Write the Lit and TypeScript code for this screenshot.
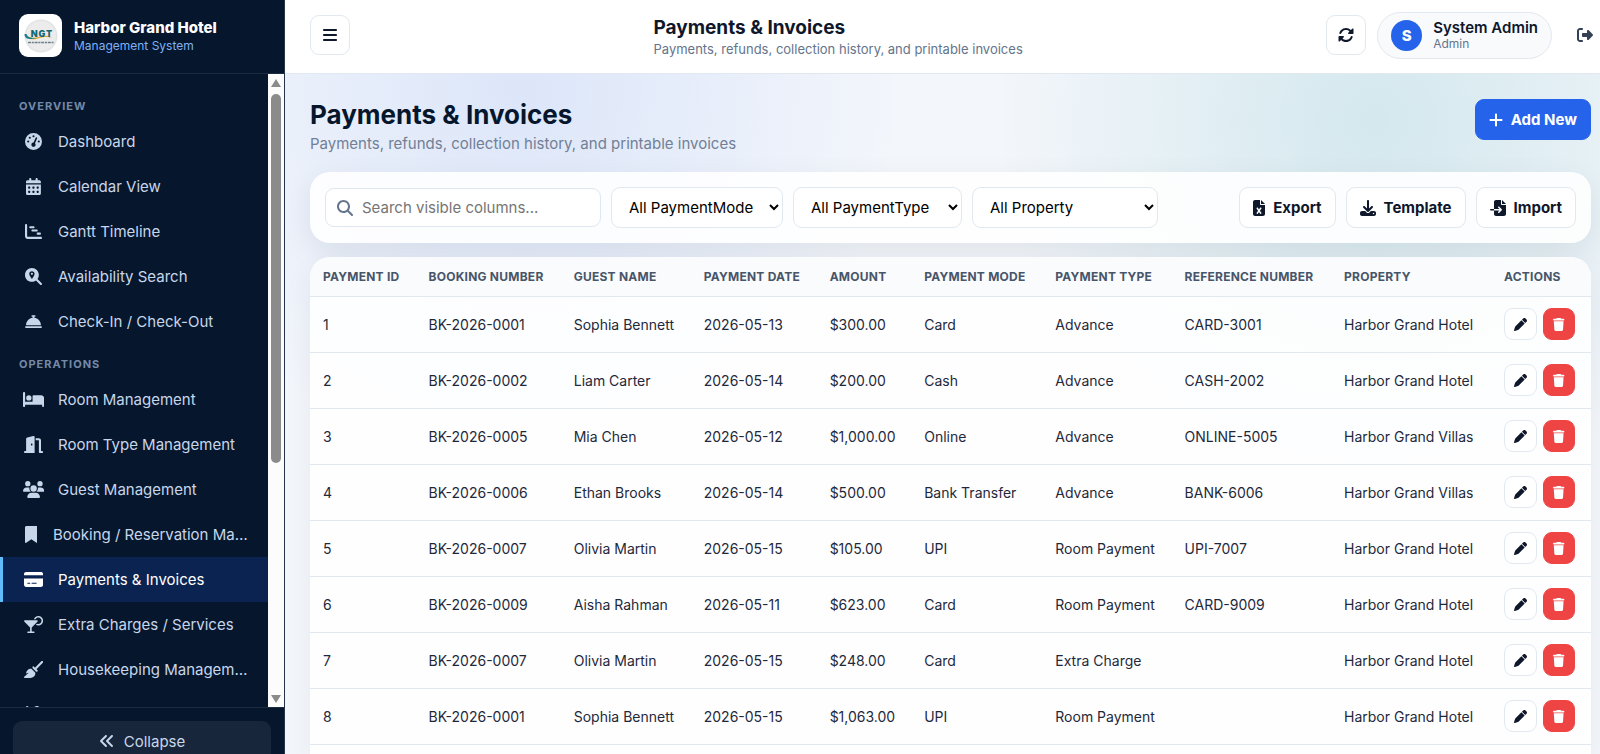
import { LitElement, html, css, svg, nothing } from "lit";
import { customElement, property, state } from "lit/decorators.js";
import { classMap } from "lit/directives/class-map.js";

type Glyph = { w: number; d: string };

const dayCell = (x: number, y: number) =>
  `M${x} ${y}l0 32c0 8.8 7.2 16 16 16l32 0c8.8 0 16-7.2 16-16l0-32c0-8.8-7.2-16-16-16l-32 0c-8.8 0-16 7.2-16 16z`;

const GLYPHS: Record<string, Glyph> = {
  bars: { w: 448, d: "M0 96C0 78.300 14.300 64 32 64l384 0c17.700 0 32 14.300 32 32s-14.300 32-32 32L32 128C14.300 128 0 113.700 0 96zM0 256c0-17.700 14.300-32 32-32l384 0c17.700 0 32 14.300 32 32s-14.300 32-32 32L32 288c-17.700 0-32-14.300-32-32zM448 416c0 17.700-14.300 32-32 32L32 448c-17.700 0-32-14.300-32-32s14.300-32 32-32l384 0c17.700 0 32 14.300 32 32z" },
  gauge: { w: 512, d: "M0 256a256 256 0 1 1 512 0A256 256 0 1 1 0 256zM288 96a32 32 0 1 0 -64 0 32 32 0 1 0 64 0zM256 416c35.3 0 64-28.7 64-64c0-17.4-6.9-33.1-18.1-44.6L366 161.7c5.3-12.1-.2-26.3-12.3-31.6s-26.3 .2-31.6 12.3L257.9 288c-.6 0-1.3 0-1.9 0c-35.3 0-64 28.7-64 64s28.700 64 64 64zM176 144a32 32 0 1 0 -64 0 32 32 0 1 0 64 0zM96 288a32 32 0 1 0 0-64 32 32 0 1 0 0 64zm352-32a32 32 0 1 0 -64 0 32 32 0 1 0 64 0z" },
  calendar: { w: 448, d: "M128 0c17.7 0 32 14.3 32 32l0 32 128 0 0-32c0-17.7 14.3-32 32-32s32 14.3 32 32l0 32 48 0c26.5 0 48 21.5 48 48l0 48L0 160l0-48C0 85.5 21.5 64 48 64l48 0 0-32c0-17.7 14.3-32 32-32zM0 192l448 0 0 272c0 26.5-21.5 48-48 48L48 512c-26.5 0-48-21.5-48-48L0 192z" + [64, 192, 320].map((x) => dayCell(x, 272) + dayCell(x, 400)).join("") },
  gantt: { w: 512, d: "M32 32c17.7 0 32 14.3 32 32l0 336c0 8.8 7.2 16 16 16l400 0c17.7 0 32 14.3 32 32s-14.3 32-32 32L80 480c-44.2 0-80-35.8-80-80L0 64C0 46.3 14.3 32 32 32zm96 96c0-17.7 14.3-32 32-32l96 0c17.7 0 32 14.3 32 32s-14.3 32-32 32l-96 0c-17.7 0-32-14.3-32-32zm96 64l128 0c17.7 0 32 14.3 32 32s-14.3 32-32 32l-128 0c-17.7 0-32-14.3-32-32s14.3-32 32-32zm160 96l64 0c17.7 0 32 14.3 32 32s-14.3 32-32 32l-64 0c-17.7 0-32-14.3-32-32s14.3-32 32-32z" },
  locate: { w: 512, d: "M416 208c0 45.9-14.9 88.3-40 122.7L502.6 457.4c12.5 12.5 12.5 32.8 0 45.3s-32.8 12.5-45.3 0L330.7 376c-34.4 25.2-76.8 40-122.7 40C93.1 416 0 322.9 0 208S93.1 0 208 0S416 93.1 416 208zM288 176c0-44.200-35.800-80-80-80s-80 35.800-80 80c0 48.800 46.500 111.600 68.600 138.600c6 7.300 16.800 7.300 22.700 0c22.100-27 68.700-89.800 68.700-138.600zm-112 0a32 32 0 1 1 64 0 32 32 0 1 1 -64 0z" },
  bell: { w: 512, d: "M216 64c-13.3 0-24 10.7-24 24s10.7 24 24 24l16 0 0 33.3C119.6 157.2 32 252.4 32 368l448 0c0-115.6-87.6-210.8-200-222.7l0-33.3 16 0c13.3 0 24-10.7 24-24s-10.7-24-24-24l-80 0zM24 400c-13.3 0-24 10.7-24 24s10.7 24 24 24l464 0c13.3 0 24-10.7 24-24s-10.7-24-24-24L24 400z" },
  bed: { w: 640, d: "M32 32c17.7 0 32 14.3 32 32l0 256 224 0 0-160c0-17.7 14.3-32 32-32l224 0c53 0 96 43 96 96l0 224c0 17.7-14.3 32-32 32s-32-14.3-32-32l0-32L64 416l0 32c0 17.7-14.3 32-32 32s-32-14.3-32-32L0 64C0 46.3 14.3 32 32 32zm144 96a80 80 0 1 1 0 160 80 80 0 1 1 0-160z" },
  door: { w: 576, d: "M320 32c0-9.9-4.5-19.2-12.3-25.2S289.8-1.4 280.2 1l-179.9 45C79 51.3 64 70.5 64 92.5L64 448l-32 0c-17.7 0-32 14.3-32 32s14.3 32 32 32l288 0 0-480zM256 256c0 17.7-10.7 32-24 32s-24-14.3-24-32s10.7-32 24-32s24 14.3 24 32zm96-128l96 0 0 352c0 17.7 14.3 32 32 32l64 0c17.7 0 32-14.3 32-32s-14.3-32-32-32l-32 0 0-320c0-35.3-28.7-64-64-64l-96 0 0 64z" },
  users: { w: 640, d: "M144 0a80 80 0 1 1 0 160A80 80 0 1 1 144 0zM512 0a80 80 0 1 1 0 160A80 80 0 1 1 512 0zM0 298.7C0 239.8 47.8 192 106.7 192l42.7 0c15.9 0 31 3.5 44.6 9.7c-1.3 7.2-1.9 14.7-1.9 22.3c0 38.2 16.8 72.5 43.3 96L21.3 320C9.6 320 0 310.4 0 298.7zM405.3 320c26.6-23.5 43.3-57.8 43.3-96c0-7.6-.7-15-1.9-22.3c13.6-6.3 28.7-9.7 44.6-9.7l42.700 0C592.2 192 640 239.8 640 298.7c0 11.8-9.6 21.3-21.3 21.3l-213.3 0zM224 224a96 96 0 1 1 192 0 96 96 0 1 1 -192 0zM128 485.3C128 411.7 187.7 352 261.3 352l117.3 0C452.3 352 512 411.7 512 485.3c0 14.7-11.9 26.7-26.700 26.700l-330.700 0c-14.700 0-26.700-11.900-26.700-26.700z" },
  bookmark: { w: 384, d: "M0 48V487.7C0 501.1 10.9 512 24.3 512c5 0 9.9-1.5 14-4.4L192 400 345.7 507.600c4.100 2.900 9 4.400 14 4.400c13.400 0 24.300-10.900 24.300-24.300V48c0-26.500-21.500-48-48-48H48C21.500 0 0 21.500 0 48z" },
  card: { w: 576, d: "M64 32C28.7 32 0 60.7 0 96l0 32 576 0 0-32c0-35.3-28.7-64-64-64L64 32zM576 224L0 224 0 416c0 35.3 28.7 64 64 64l448 0c35.3 0 64-28.7 64-64l0-192zM112 352l64 0c8.8 0 16 7.2 16 16s-7.2 16-16 16l-64 0c-8.8 0-16-7.2-16-16s7.2-16 16-16zm112 16c0-8.8 7.2-16 16-16l128 0c8.8 0 16 7.2 16 16s-7.2 16-16 16l-128 0c-8.8 0-16-7.2-16-16z" },
  martini: { w: 576, d: "M432 240c53 0 96-43 96-96s-43-96-96-96c-35.5 0-66.6 19.300-83.200 48l-52.600 0C316 40.100 369.300 0 432 0c79.500 0 144 64.500 144 144s-64.500 144-144 144c-27.700 0-53.500-7.800-75.500-21.300l35.400-35.400c12.200 5.600 25.800 8.700 40.100 8.700zM1.800 142.800C5.500 133.800 14.300 128 24 128l368 0c9.700 0 18.500 5.800 22.200 14.800s1.700 19.300-5.200 26.200L232 345.900 232 464l64 0c13.300 0 24 10.700 24 24s-10.700 24-24 24l-176 0c-13.300 0-24-10.700-24-24s10.700-24 24-24l64 0 0-118.100L7 169c-6.900-6.900-8.900-17.200-5.200-26.200z" },
  broom: { w: 576, d: "M566.6 54.6c12.5-12.5 12.5-32.8 0-45.3s-32.8-12.5-45.3 0l-192 192-34.7-34.7c-4.2-4.2-10-6.6-16-6.6c-12.5 0-22.6 10.1-22.6 22.6l0 29.1L364.3 320l29.1 0c12.5 0 22.6-10.1 22.6-22.6c0-6-2.4-11.8-6.6-16l-34.7-34.7 192-192zM341.1 353.4L222.6 234.9c-42.7-3.7-85.2 11.7-115.8 42.3l-8 8C76.5 307.5 64 337.7 64 369.2c0 6.8 7.1 11.2 13.2 8.2l51.1-25.5c5-2.5 9.5 4.1 5.4 7.9L7.3 473.4C2.7 477.6 0 483.6 0 489.9C0 502.1 9.9 512 22.1 512l173.3 0c38.8 0 75.9-15.4 103.4-42.8c30.6-30.6 45.9-73.1 42.3-115.8z" },
  tools: { w: 512, d: "M78.6 5C69.1-2.4 55.6-1.5 47 7L7 47c-8.5 8.5-9.4 22-2.1 31.6l80 104c4.5 5.9 11.6 9.4 19 9.400l54.100 0 109 109c-14.700 29-10 65.400 14.300 89.600l112 112c12.500 12.500 32.800 12.500 45.300 0l64-64c12.500-12.500 12.500-32.800 0-45.300l-112-112c-24.200-24.200-60.600-29-89.600-14.300l-109-109 0-54.100c0-7.500-3.500-14.500-9.400-19L78.600 5zM19.900 396.100C7.200 408.800 0 426.100 0 444.100C0 481.600 30.400 512 67.900 512c18 0 35.300-7.200 48-19.900L233.700 374.300c-7.800-20.900-9-43.600-3.600-65.100l-61.700-61.700L19.900 396.100zM512 144c0-10.500-1.100-20.700-3.200-30.500c-2.400-11.200-16.100-14.100-24.200-6l-63.900 63.900c-3 3-7.100 4.700-11.300 4.700L352 176c-8.800 0-16-7.200-16-16l0-57.400c0-4.200 1.700-8.300 4.700-11.300l63.900-63.900c8.100-8.100 5.200-21.800-6-24.200C388.700 1.100 378.500 0 368 0C288.500 0 224 64.500 224 144l0 .8 85.300 85.300c36-9.100 75.800 .5 104 28.700L429 274.500c49-23 83-72.800 83-130.500z" },
  collapse: { w: 512, d: "M41.4 233.4c-12.5 12.5-12.5 32.8 0 45.3l160 160c12.5 12.5 32.8 12.5 45.3 0s12.5-32.8 0-45.3L109.3 256 246.6 118.6c12.5-12.5 12.5-32.8 0-45.3s-32.8-12.5-45.3 0l-160 160zm352-160l-160 160c-12.5 12.5-12.5 32.8 0 45.3l160 160c12.5 12.5 32.8 12.5 45.3 0s12.5-32.8 0-45.3L301.3 256 438.6 118.6c12.5-12.5 12.5-32.8 0-45.3s-32.8-12.5-45.3 0z" },
  rotate: { w: 512, d: "M142.9 142.9c-17.5 17.5-30.1 38-37.8 59.8c-5.9 16.7-24.2 25.4-40.8 19.5s-25.4-24.2-19.5-40.8C55.6 150.7 73.2 122 97.6 97.6c87.2-87.2 228.3-87.5 315.8-1L455 55c6.9-6.9 17.2-8.9 26.2-5.2s14.8 12.5 14.8 22.2l0 128c0 13.3-10.7 24-24 24L344 224c-9.7 0-18.5-5.8-22.2-14.8s-1.7-19.3 5.2-26.2l41.1-41.1c-62.6-61.5-163.1-61.2-225.3 1zM16 312c0-13.3 10.7-24 24-24L168 288c9.7 0 18.5 5.8 22.2 14.8s1.7 19.3-5.2 26.2l-41.1 41.1c62.6 61.5 163.1 61.2 225.3-1c17.5-17.5 30.1-38 37.8-59.8c5.9-16.7 24.2-25.4 40.8-19.5s25.4 24.2 19.5 40.8c-10.8 30.6-28.4 59.3-52.9 83.8c-87.2 87.2-228.3 87.5-315.8 1L57 457c-6.9 6.9-17.2 8.900-26.200 5.200S16 449.700 16 440l0-128z" },
  logout: { w: 512, d: "M377.9 105.9L500.7 228.7c7.2 7.2 11.3 17.1 11.3 27.3s-4.1 20.1-11.3 27.3L377.9 406.1c-6.4 6.4-15 9.9-24 9.9c-18.7 0-33.9-15.2-33.9-33.9l0-62.1-128 0c-17.7 0-32-14.3-32-32l0-64c0-17.7 14.3-32 32-32l128 0 0-62.1c0-18.7 15.2-33.9 33.9-33.9c9 0 17.6 3.6 24 9.9zM160 96L96 96c-17.7 0-32 14.3-32 32l0 256c0 17.7 14.3 32 32 32l64 0c17.7 0 32 14.3 32 32s-14.3 32-32 32l-64 0c-53 0-96-43-96-96L0 128C0 75 43 32 96 32l64 0c17.7 0 32 14.3 32 32s-14.3 32-32 32z" },
  plus: { w: 448, d: "M256 80c0-17.7-14.3-32-32-32s-32 14.3-32 32l0 144L48 224c-17.7 0-32 14.3-32 32s14.3 32 32 32l144 0 0 144c0 17.7 14.3 32 32 32s32-14.3 32-32l0-144 144 0c17.7 0 32-14.3 32-32s-14.3-32-32-32l-144 0 0-144z" },
  search: { w: 512, d: "M416 208c0 45.9-14.9 88.3-40 122.7L502.6 457.4c12.5 12.5 12.5 32.8 0 45.3s-32.8 12.5-45.3 0L330.7 376c-34.4 25.2-76.8 40-122.7 40C93.1 416 0 322.9 0 208S93.1 0 208 0S416 93.1 416 208zM208 352a144 144 0 1 0 0-288 144 144 0 1 0 0 288z" },
  excel: { w: 384, d: "M64 0C28.7 0 0 28.7 0 64L0 448c0 35.3 28.7 64 64 64l256 0c35.3 0 64-28.7 64-64l0-288-128 0c-17.7 0-32-14.3-32-32L224 0 64 0zM256 0l0 128 128 0L256 0zM155.700 250.200L192 302.100l36.300-51.900c7.600-10.900 22.600-13.500 33.400-5.900s13.500 22.600 5.900 33.400L221.300 344l46.400 66.200c7.600 10.900 5 25.800-5.900 33.400s-25.800 5-33.400-5.900L192 385.800l-36.300 51.900c-7.600 10.900-22.600 13.500-33.400 5.900s-13.500-22.600-5.900-33.400L162.700 344l-46.400-66.200c-7.600-10.900-5-25.800 5.900-33.400s25.800-5 33.400 5.900z" },
  download: { w: 512, d: "M288 32c0-17.7-14.3-32-32-32s-32 14.3-32 32l0 242.7-73.4-73.4c-12.5-12.5-32.8-12.5-45.3 0s-12.5 32.8 0 45.3l128 128c12.5 12.5 32.8 12.5 45.3 0l128-128c12.5-12.5 12.5-32.8 0-45.3s-32.8-12.5-45.3 0L288 274.7 288 32zM64 352c-35.3 0-64 28.7-64 64l0 32c0 35.3 28.7 64 64 64l384 0c35.3 0 64-28.7 64-64l0-32c0-35.3-28.7-64-64-64l-101.5 0-45.3 45.3c-25 25-65.5 25-90.5 0L165.5 352 64 352zm368 56a24 24 0 1 1 0 48 24 24 0 1 1 0-48z" },
  fileImport: { w: 512, d: "M128 64c0-35.3 28.7-64 64-64L352 0l0 128c0 17.7 14.3 32 32 32l128 0 0 288c0 35.3-28.7 64-64 64l-256 0c-35.3 0-64-28.7-64-64l0-112 174.1 0-39 39c-9.4 9.4-9.4 24.6 0 33.9s24.6 9.4 33.9 0l80-80c9.4-9.4 9.4-24.6 0-33.9l-80-80c-9.4-9.4-24.6-9.4-33.9 0s-9.4 24.6 0 33.9l39 39L128 288l0-224zm0 224l0 48L24 336c-13.3 0-24-10.7-24-24s10.7-24 24-24l104 0zM512 128l-128 0L384 0 512 128z" },
  pen: { w: 512, d: "M362.7 19.3L314.3 67.7 444.3 197.7l48.4-48.4c25-25 25-65.5 0-90.5L453.3 19.3c-25-25-65.5-25-90.5 0zm-71 71L58.6 323.5c-10.4 10.4-18 23.3-22.2 37.4L1 481.2C-1.5 489.7 .8 498.8 7 505s15.3 8.5 23.7 6.1l120.3-35.4c14.1-4.2 27-11.8 37.4-22.2L421.7 220.3 291.7 90.3z" },
  trash: { w: 448, d: "M135.2 17.7L128 32 32 32C14.3 32 0 46.3 0 64S14.3 96 32 96l384 0c17.7 0 32-14.3 32-32s-14.3-32-32-32l-96 0-7.2-14.3C307.4 6.8 296.3 0 284.2 0L163.8 0c-12.1 0-23.2 6.8-28.6 17.7zM416 128L32 128 53.2 467c1.6 25.3 22.6 45 47.9 45l245.8 0c25.3 0 46.3-19.7 47.9-45L416 128z" },
};

const icon = (name: string, size = 16) => {
  const g = GLYPHS[name];
  return html`<svg viewBox="0 0 ${g.w} 512" width=${(g.w * size) / 512} height=${size} fill="currentColor" fill-rule="evenodd" aria-hidden="true">${svg`<path d=${g.d}></path>`}</svg>`;
};

const base = css`
  *, *::before, *::after { box-sizing: border-box; }
  :host { font-family: Inter, "Liberation Sans", sans-serif; color: #0f172a; }
  svg { display: block; flex: none; }
  button, input, select { font: inherit; color: inherit; margin: 0; }
  button { cursor: pointer; }
  h1, h2, p { margin: 0; }
`;

const NAV = [
  { title: "Overview", items: [["gauge", "Dashboard"], ["calendar", "Calendar View"], ["gantt", "Gantt Timeline"], ["locate", "Availability Search"], ["bell", "Check-In / Check-Out"]] },
  { title: "Operations", items: [["bed", "Room Management"], ["door", "Room Type Management"], ["users", "Guest Management"], ["bookmark", "Booking / Reservation Management"], ["card", "Payments & Invoices"], ["martini", "Extra Charges / Services"], ["broom", "Housekeeping Management"], ["tools", "Maintenance"]] },
];

@customElement("hotel-sidebar")
class HotelSidebar extends LitElement {
  @property() active = "";

  static styles = [base, css`
    :host { display: flex; flex-direction: column; height: 100%; min-height: 0; background: #06172d; border-right: 1px solid #24344a; }
    .brand { display: flex; align-items: center; gap: 12px; height: 74px; flex: none; padding: 0 19px 2px; border-bottom: 1px solid #1b2b40; }
    .logo { width: 43px; height: 43px; border-radius: 9px; background: #fff; display: grid; place-items: center; }
    .name { font-size: 15px; line-height: 20px; font-weight: 800; color: #fff; white-space: nowrap; }
    .tag { font-size: 12px; line-height: 16px; color: #7fb0f5; }
    .body { display: flex; flex: 1; min-height: 0; }
    nav { flex: 1; min-width: 0; overflow: hidden; padding-top: 12px; }
    .group { padding: 13px 19px 6px; font-size: 11px; line-height: 14px; font-weight: 700; letter-spacing: 1px; text-transform: uppercase; color: #7589a8; }
    .item { display: flex; align-items: center; gap: 13px; height: 45px; padding: 0 16px 0 19px; border-left: 3px solid transparent; color: #c8d6ea; font-size: 15px; text-decoration: none; }
    .item.on { background: #0b2350; border-left-color: #60bdfa; color: #fff; }
    .ico { display: grid; place-items: center; flex: 0 0 23px; }
    .ico.tight { flex-basis: 18px; }
    .label { flex: 1; min-width: 0; overflow: hidden; text-overflow: ellipsis; white-space: nowrap; line-height: 24px; }
    .bar { flex: 0 0 16px; background: #fcfcfc; display: flex; flex-direction: column; align-items: center; padding: 5px 0 4px; }
    .arrow { border: 5px solid transparent; border-top: 0; border-bottom: 8px solid #8b8b8b; }
    .arrow.down { border-bottom: 0; border-top: 8px solid #8b8b8b; }
    .track { flex: 1; width: 10px; padding: 7px 0 6px; }
    .thumb { height: 62%; border-radius: 5px; background: #8b8b8b; }
    .foot { flex: none; padding: 13px; height: 47px; border-top: 1px solid #1b2b40; overflow: hidden; }
    .collapse { width: 100%; height: 40px; border: 0; border-radius: 9px; background: #17263b; color: #c8d6ea; font-size: 15px; display: flex; align-items: center; justify-content: center; gap: 9px; }
  `];

  render() {
    return html`
      <div class="brand">
        <div class="logo">
          <svg width="36" height="36" viewBox="0 0 36 36" role="img" aria-label="NGT">
            <circle cx="18" cy="18" r="16.500" fill="#e2e3e5"></circle>
            <circle cx="18" cy="18" r="15" fill="#ececed"></circle>
            <path d="M4 17c1 5 6 5 11 3.500 5-1.500 9-2 14-.5-5-3.500-10-2-14-1C10 20.300 6 20 4 17z" fill="#e2a93b"></path>
            <path d="M1.500 16c0 5.500 6 6 12 4-5 .3-9-.5-10-4z" fill="#17818a"></path>
            <text x="19" y="19" text-anchor="middle" font-size="9" font-weight="900" letter-spacing="1" fill="#176a74">NGT</text>
            <path d="M5 24.500h26" stroke="#6d7f88" stroke-width="1.500" stroke-dasharray="3 .8 2 .8"></path>
          </svg>
        </div>
        <div>
          <div class="name">Harbor Grand Hotel</div>
          <div class="tag">Management System</div>
        </div>
      </div>
      <div class="body">
        <nav aria-label="Main">
          ${NAV.map((g) => html`
            <div class="group">${g.title}</div>
            ${g.items.map(([ico, label]) => html`
              <a class=${classMap({ item: true, on: label === this.active })} href="#" aria-current=${label === this.active ? "page" : nothing}>
                <span class=${classMap({ ico: true, tight: ico === "bookmark" })}>${icon(ico, 17)}</span>
                <span class="label">${label}</span>
              </a>`)}
          `)}
        </nav>
        <div class="bar" aria-hidden="true">
          <div class="arrow"></div>
          <div class="track"><div class="thumb"></div></div>
          <div class="arrow down"></div>
        </div>
      </div>
      <div class="foot"><button class="collapse" type="button">${icon("collapse", 16)}<span>Collapse</span></button></div>
    `;
  }
}

@customElement("top-bar")
class TopBar extends LitElement {
  static styles = [base, css`
    :host { display: flex; align-items: center; justify-content: space-between; height: 74px; padding: 0 7px 3px 25px; background: #fff; border-bottom: 1px solid #e2e8f0; }
    .square { width: 40px; height: 40px; border: 1px solid #e2e8f0; border-radius: 9px; background: #fff; display: grid; place-items: center; padding: 0; }
    .heading { padding-top: 3px; }
    .title { font-size: 19px; line-height: 24px; font-weight: 700; }
    .sub { font-size: 13px; line-height: 18px; color: #64748b; }
    .right { display: flex; align-items: center; gap: 11px; }
    .user { display: flex; align-items: center; gap: 11px; height: 47px; padding: 0 13px; border: 1px solid #e2e8f0; border-radius: 24px; background: #f8fafc; }
    .avatar { width: 31px; height: 31px; border-radius: 50%; background: #2563eb; color: #fff; font-size: 15px; font-weight: 800; display: grid; place-items: center; }
    .who { font-size: 15px; line-height: 18px; font-weight: 600; white-space: nowrap; }
    .role { font-size: 12px; line-height: 14px; color: #64748b; }
    .exit { border: 0; background: none; height: 40px; padding: 0 0 0 14px; display: grid; place-items: center; color: #334155; }
  `];

  render() {
    return html`
      <button class="square" type="button" aria-label="Toggle menu">${icon("bars", 16)}</button>
      <div class="heading">
        <div class="title">Payments &amp; Invoices</div>
        <p class="sub">Payments, refunds, collection history, and printable invoices</p>
      </div>
      <div class="right">
        <button class="square" type="button" aria-label="Refresh">${icon("rotate", 16)}</button>
        <div class="user">
          <span class="avatar">S</span>
          <div><div class="who">System Admin</div><div class="role">Admin</div></div>
        </div>
        <button class="exit" type="button" aria-label="Log out">${icon("logout", 16)}</button>
      </div>
    `;
  }
}

const HEADS = ["Payment ID", "Booking Number", "Guest Name", "Payment Date", "Amount", "Payment Mode", "Payment Type", "Reference Number", "Property", "Actions"];

const ROWS = [
  ["1", "BK-2026-0001", "Sophia Bennett", "2026-05-13", "$300.00", "Card", "Advance", "CARD-3001", "Harbor Grand Hotel"],
  ["2", "BK-2026-0002", "Liam Carter", "2026-05-14", "$200.00", "Cash", "Advance", "CASH-2002", "Harbor Grand Hotel"],
  ["3", "BK-2026-0005", "Mia Chen", "2026-05-12", "$1,000.00", "Online", "Advance", "ONLINE-5005", "Harbor Grand Villas"],
  ["4", "BK-2026-0006", "Ethan Brooks", "2026-05-14", "$500.00", "Bank Transfer", "Advance", "BANK-6006", "Harbor Grand Villas"],
  ["5", "BK-2026-0007", "Olivia Martin", "2026-05-15", "$105.00", "UPI", "Room Payment", "UPI-7007", "Harbor Grand Hotel"],
  ["6", "BK-2026-0009", "Aisha Rahman", "2026-05-11", "$623.00", "Card", "Room Payment", "CARD-9009", "Harbor Grand Hotel"],
  ["7", "BK-2026-0007", "Olivia Martin", "2026-05-15", "$248.00", "Card", "Extra Charge", "", "Harbor Grand Hotel"],
  ["8", "BK-2026-0001", "Sophia Bennett", "2026-05-15", "$1,063.00", "UPI", "Room Payment", "", "Harbor Grand Hotel"],
];

@customElement("payments-table")
class PaymentsTable extends LitElement {
  @property({ attribute: false }) rows: string[][] = [];

  static styles = [base, css`
    :host { display: block; flex: 1; background: rgba(255, 255, 255, 0.88); border-radius: 20px 20px 0 0; box-shadow: 0 10px 30px rgba(15, 23, 42, 0.06); overflow: hidden; }
    table { width: 100%; border-collapse: collapse; }
    th { height: 39px; padding: 0 13px; text-align: left; font-size: 12px; font-weight: 700; letter-spacing: 0.02em; text-transform: uppercase; color: #475569; background: rgba(248, 250, 252, 0.7); border-bottom: 1px solid #e2e8f0; white-space: nowrap; }
    td { height: 56px; padding: 0 13px; font-size: 14px; color: #1e293b; border-bottom: 1px solid #e2e8f0; white-space: nowrap; }
    .acts { display: flex; gap: 6px; }
    .act { width: 33px; height: 32px; padding: 0; border-radius: 9px; display: grid; place-items: center; border: 1px solid #e2e8f0; background: #fff; color: #0f172a; }
    .act.del { width: 32px; border-color: #ef4444; background: #ef4444; color: #fff; }
  `];

  render() {
    return html`
      <table>
        <thead><tr>${HEADS.map((h) => html`<th scope="col">${h}</th>`)}</tr></thead>
        <tbody>
          ${this.rows.map((r) => html`<tr>
            ${r.map((c) => html`<td>${c}</td>`)}
            <td><div class="acts">
              <button class="act" type="button" aria-label="Edit payment ${r[0]}">${icon("pen", 13)}</button>
              <button class="act del" type="button" aria-label="Delete payment ${r[0]}">${icon("trash", 13)}</button>
            </div></td>
          </tr>`)}
        </tbody>
      </table>
    `;
  }
}

@customElement("app-root")
class AppRoot extends LitElement {
  @state() private query = "";

  static styles = [base, css`
    :host { display: grid; grid-template-columns: 285px minmax(0, 1fr); height: 100vh; overflow: hidden; }
    .main { display: flex; flex-direction: column; min-width: 0; min-height: 0; overflow: hidden;
      background:
        radial-gradient(circle at 18% 12%, rgba(37, 99, 235, 0.11), rgba(37, 99, 235, 0) 380px),
        radial-gradient(circle at 83% 16%, rgba(20, 148, 156, 0.14), rgba(20, 148, 156, 0) 380px),
        #f3f6fb; }
    .page { flex: 1; display: flex; flex-direction: column; min-height: 0; padding: 25px 9px 0 25px; }
    .head { display: flex; justify-content: space-between; align-items: flex-start; margin-bottom: 17px; }
    h1 { font-size: 26px; line-height: 31px; font-weight: 700; color: #06172d; }
    .lead { margin-top: 3px; font-size: 15px; line-height: 22px; color: #718096; }
    .btn { display: flex; align-items: center; gap: 8px; height: 41px; padding: 0 13px; border: 1px solid #e2e8f0; border-radius: 9px; background: #fff; font-size: 15px; font-weight: 700; white-space: nowrap; }
    .btn.primary { background: #2563eb; border-color: #2563eb; color: #fff; }
    .tools { display: flex; align-items: center; gap: 10px; height: 71px; flex: none; padding: 0 15px; margin-bottom: 14px; border-radius: 20px; background: rgba(255, 255, 255, 0.88); box-shadow: 0 10px 30px rgba(15, 23, 42, 0.08); }
    .search { display: flex; align-items: center; gap: 9px; width: 276px; height: 39px; padding: 0 11px; border: 1px solid #dfe7f0; border-radius: 9px; background: #fff; color: #64748b; }
    .search input { flex: 1; min-width: 0; border: 0; outline: 0; padding: 0; background: none; font-size: 15px; color: #0f172a; }
    .search input::placeholder { color: #757575; }
    select { height: 41px; padding: 0 0 0 13px; border: 1px solid #e2e8f0; border-radius: 9px; background: #fff; color: #000; font-size: 15px; }
    .mode { width: 172px; }
    .type { width: 169px; }
    .place { width: 186px; }
    .acts { display: flex; gap: 10px; margin-left: auto; }
  `];

  render() {
    const q = this.query.toLowerCase();
    const rows = ROWS.filter((r) => r.some((c) => c.toLowerCase().includes(q)));
    return html`
      <hotel-sidebar active="Payments &amp; Invoices"></hotel-sidebar>
      <div class="main">
        <top-bar></top-bar>
        <main class="page">
          <div class="head">
            <div>
              <h1>Payments &amp; Invoices</h1>
              <p class="lead">Payments, refunds, collection history, and printable invoices</p>
            </div>
            <button class="btn primary" type="button">${icon("plus", 16)}Add New</button>
          </div>
          <div class="tools">
            <label class="search">${icon("search", 16)}
              <input type="text" aria-label="Search visible columns" placeholder="Search visible columns..." @input=${(e: Event) => (this.query = (e.target as HTMLInputElement).value)}>
            </label>
            <select class="mode" aria-label="Payment mode"><option>All PaymentMode</option></select>
            <select class="type" aria-label="Payment type"><option>All PaymentType</option></select>
            <select class="place" aria-label="Property"><option>All Property</option></select>
            <div class="acts">
              <button class="btn" type="button">${icon("excel", 16)}Export</button>
              <button class="btn" type="button">${icon("download", 16)}Template</button>
              <button class="btn" type="button">${icon("fileImport", 16)}Import</button>
            </div>
          </div>
          <payments-table .rows=${rows}></payments-table>
        </main>
      </div>
    `;
  }
}
